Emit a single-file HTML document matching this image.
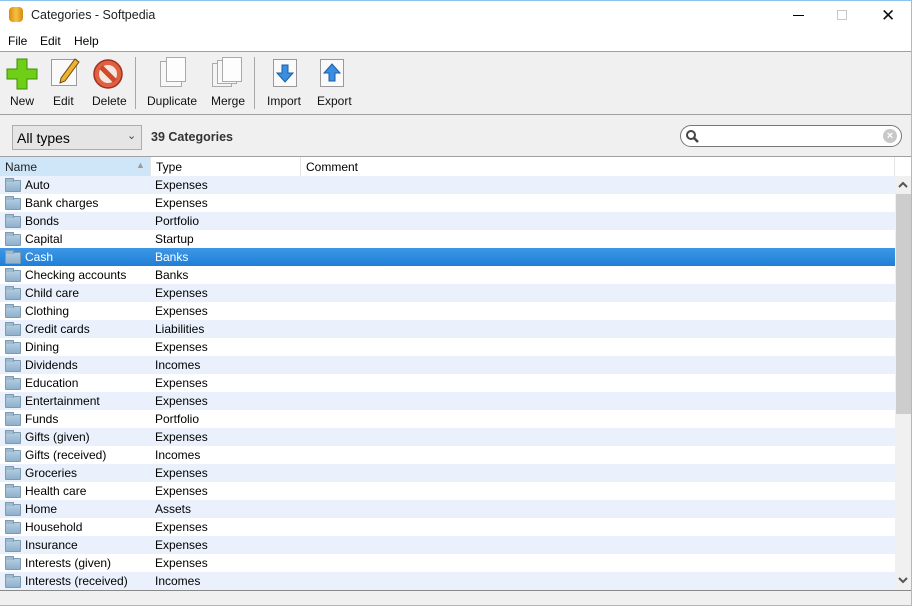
<!DOCTYPE html>
<html><head><style>
*{margin:0;padding:0;box-sizing:border-box}
body{width:912px;height:606px;position:relative;overflow:hidden;background:#f0f0f0;font-family:"Liberation Sans",sans-serif;font-size:12px;color:#000}
.abs{position:absolute}
.title{left:0;top:1px;width:911px;height:30px;background:#fff}
.menu{left:0;top:31px;width:911px;height:20px;background:#fff}
.menu span{position:absolute;top:3px;font-size:12px}
.tb{left:0;top:51px;width:911px;height:64px;background:#f0f0f0;border-top:1px solid #a0a0a0;border-bottom:1px solid #a0a0a0}
.btn{position:absolute;top:42px;font-size:12px;text-align:center;color:#111}
.sep{position:absolute;top:5px;width:1px;height:52px;background:#a8a8a8}
.list{left:0;top:157px;width:911px;height:434px;background:#fff;overflow:hidden}
.hdr{position:absolute;top:0;height:19px;font-size:12px;padding:3px 0 0 5px;border-right:1px solid #e5e5e5}
.row{position:absolute;left:0;width:895px;height:18px;font-size:12px}
.row.s{background:#eaf1fc}
.row.sel{background:linear-gradient(#3d97e6,#1f7fd6);color:#fff}
.row .n{position:absolute;left:25px;top:2px}
.row .t{position:absolute;left:155px;top:2px}
.fold{position:absolute;left:5px;top:4px;width:16px;height:12px;background:linear-gradient(#b4cde0,#8fb0cc);border:1px solid #7e9bb3;border-radius:1px}
.fold:before{content:"";position:absolute;left:-1px;top:-3px;width:7px;height:3px;background:#9dbad3;border:1px solid #7e9bb3;border-bottom:none}
</style></head><body>
<div class="abs title"></div>
<div class="abs" style="left:9px;top:7px;width:14px;height:15px;border-radius:4px;background:linear-gradient(90deg,#d88a10,#f7c040,#d58a10)"></div>
<div class="abs" style="left:31px;top:8px;font-size:12.5px;color:#222">Categories - Softpedia</div>
<div class="abs" style="left:793px;top:15px;width:11px;height:1px;background:#000"></div>
<div class="abs" style="left:837px;top:10px;width:10px;height:10px;border:1px solid #c8c8c8"></div>
<div class="abs" style="left:881px;top:6px;font-size:17px;color:#111">✕</div>
<div class="abs menu"><span style="left:8px">File</span><span style="left:40px">Edit</span><span style="left:74px">Help</span></div>
<div class="abs tb">
 <svg class="abs" style="left:6px;top:6px" width="32" height="32"><path d="M11 1h10v10h10v10H21v10H11V21H1V11h10z" fill="#6fcf17" stroke="#3d8d0b"/></svg>
 <div class="abs" style="left:51px;top:7px;width:26px;height:27px;background:#fafafa;border:1px solid #9a9a9a"></div>
 <svg class="abs" style="left:55px;top:5px" width="26" height="28"><path d="M20 2l4 3L10 24l-5 2 1-5z" fill="#f0b030" stroke="#6a4a10"/></svg>
 <svg class="abs" style="left:92px;top:6px" width="32" height="32"><circle cx="16" cy="16" r="14" fill="#e06040" stroke="#a03020" stroke-width="1.5"/><circle cx="16" cy="16" r="9" fill="#f4e6e0"/><path d="M9 9l14 14" stroke="#d04a2a" stroke-width="5"/></svg>
 <div class="sep" style="left:135px"></div>
 <div class="abs" style="left:160px;top:9px;width:22px;height:26px;background:#f8f8f8;border:1px solid #aaa"></div>
 <div class="abs" style="left:166px;top:5px;width:20px;height:25px;background:#fdfdfd;border:1px solid #aaa"></div>
 <div class="abs" style="left:212px;top:11px;width:20px;height:24px;background:#f4f4f4;border:1px solid #aaa"></div>
 <div class="abs" style="left:217px;top:8px;width:20px;height:24px;background:#f8f8f8;border:1px solid #aaa"></div>
 <div class="abs" style="left:222px;top:5px;width:20px;height:25px;background:#fdfdfd;border:1px solid #aaa"></div>
 <div class="sep" style="left:254px"></div>
 <div class="abs" style="left:273px;top:7px;width:24px;height:28px;background:#fafafa;border:1px solid #999"></div>
 <svg class="abs" style="left:275px;top:10px" width="20" height="22"><path d="M7 3h6v8h5l-8 9-8-9h5z" fill="#3b8ee0" stroke="#1b5fa8"/></svg>
 <div class="abs" style="left:320px;top:7px;width:24px;height:28px;background:#fafafa;border:1px solid #999"></div>
 <svg class="abs" style="left:322px;top:10px" width="20" height="22"><path d="M10 2l8 9h-5v8H7v-8H2z" fill="#3b8ee0" stroke="#1b5fa8"/></svg>
 <div class="btn" style="left:10px">New</div>
 <div class="btn" style="left:53px">Edit</div>
 <div class="btn" style="left:92px">Delete</div>
 <div class="btn" style="left:147px">Duplicate</div>
 <div class="btn" style="left:211px">Merge</div>
 <div class="btn" style="left:267px">Import</div>
 <div class="btn" style="left:317px">Export</div>
</div>
<div class="abs" style="left:12px;top:125px;width:130px;height:25px;background:#e5e5e5;border:1px solid #adadad"></div>
<div class="abs" style="left:17px;top:130px;font-size:14px">All types</div>
<div class="abs" style="left:127px;top:129px;font-size:11px;color:#444">⌄</div>
<div class="abs" style="left:151px;top:130px;font-weight:bold;font-size:12.5px;color:#333">39 Categories</div>
<div class="abs" style="left:680px;top:125px;width:222px;height:22px;background:#fff;border:1px solid #777;border-radius:11px"></div>
<svg class="abs" style="left:685px;top:129px" width="14" height="14"><circle cx="6" cy="6" r="4" fill="none" stroke="#444" stroke-width="2"/><path d="M9 9l4 4" stroke="#444" stroke-width="2.5"/></svg>
<div class="abs" style="left:883px;top:129px;width:14px;height:14px;border-radius:7px;background:#c8c8c8;color:#fff;font-size:11px;line-height:14px;text-align:center;font-weight:bold">×</div>
<div class="abs" style="left:0;top:156px;width:911px;height:1px;background:#a0a0a0"></div>
<div class="abs list">
 <div class="hdr" style="left:0;width:151px;background:#cfe6f8;color:#222">Name<span style="position:absolute;left:136px;top:3px;font-size:9px;color:#999">▲</span></div>
 <div class="hdr" style="left:151px;width:150px;">Type</div>
 <div class="hdr" style="left:301px;width:594px;">Comment</div>
 <div id="rows"></div>
 <div class="abs" style="left:895px;top:19px;width:16px;height:415px;background:#f0f0f0"></div>
 <svg class="abs" style="left:898px;top:24px" width="10" height="8"><path d="M1 6l4-4 4 4" fill="none" stroke="#555" stroke-width="2"/></svg>
 <div class="abs" style="left:896px;top:37px;width:15px;height:220px;background:#cdcdcd"></div>
 <svg class="abs" style="left:898px;top:419px" width="10" height="8"><path d="M1 2l4 4 4-4" fill="none" stroke="#555" stroke-width="2"/></svg>
</div>
<div class="abs" style="left:0;top:590px;width:911px;height:1px;background:#888"></div>
<div class="abs" style="left:0;top:605px;width:912px;height:1px;background:#8cc3ee"></div>
<div class="abs" style="right:0;top:0;width:1px;height:606px;background:#8cc3ee"></div>
<div class="abs" style="left:0;top:0;width:912px;height:1px;background:#8cc3ee"></div>
<script>
var d=[["Auto","Expenses"],["Bank charges","Expenses"],["Bonds","Portfolio"],["Capital","Startup"],["Cash","Banks"],["Checking accounts","Banks"],["Child care","Expenses"],["Clothing","Expenses"],["Credit cards","Liabilities"],["Dining","Expenses"],["Dividends","Incomes"],["Education","Expenses"],["Entertainment","Expenses"],["Funds","Portfolio"],["Gifts (given)","Expenses"],["Gifts (received)","Incomes"],["Groceries","Expenses"],["Health care","Expenses"],["Home","Assets"],["Household","Expenses"],["Insurance","Expenses"],["Interests (given)","Expenses"],["Interests (received)","Incomes"],["Investments","Expenses"]];
var h="";d.forEach(function(r,i){var c=i==4?"row sel":(i%2==0?"row s":"row");h+='<div class="'+c+'" style="top:'+(19+18*i)+'px"><div class="fold"></div><span class="n">'+r[0]+'</span><span class="t">'+r[1]+'</span></div>';});
document.getElementById("rows").innerHTML=h;
</script>
</body></html>
